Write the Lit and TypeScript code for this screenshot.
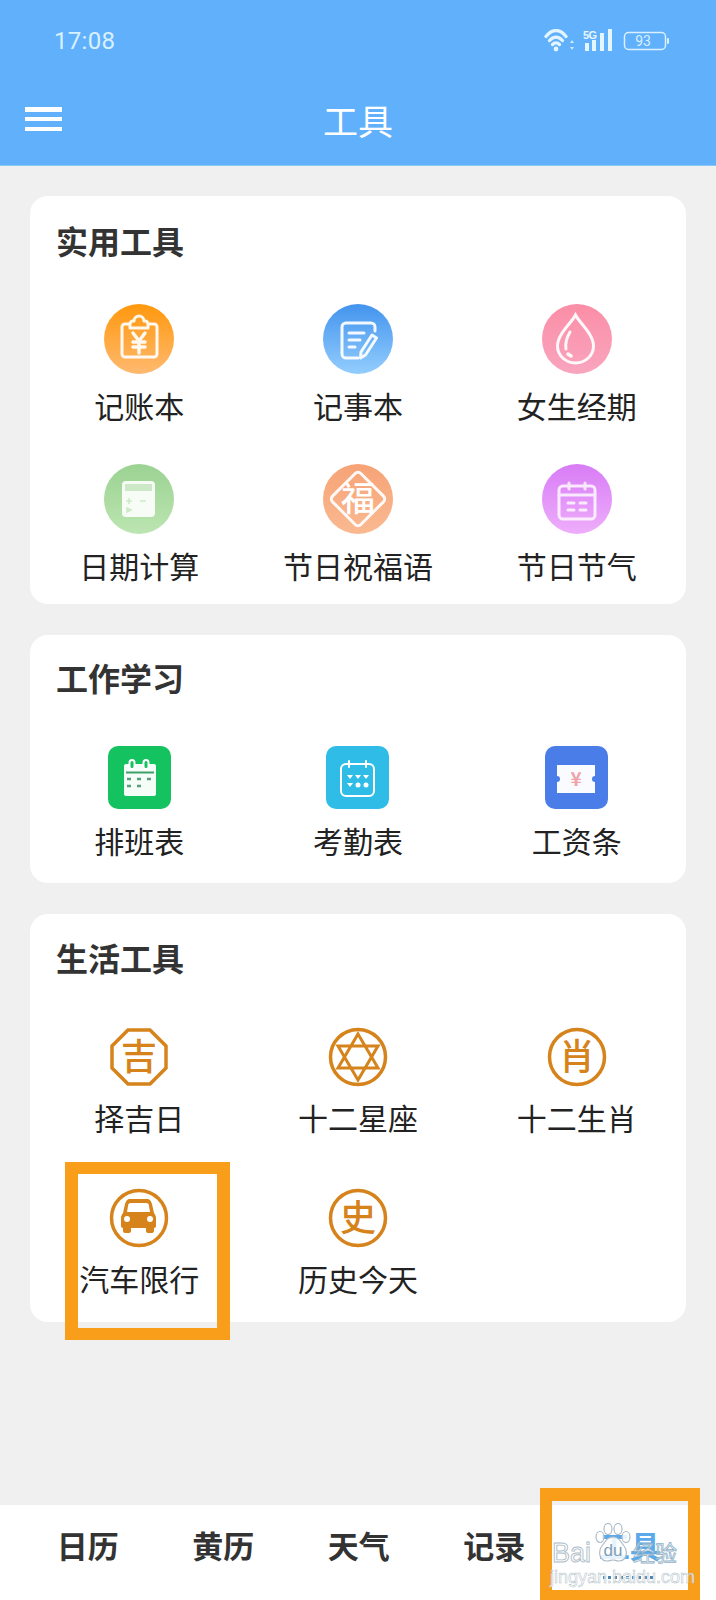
import { LitElement, html, css, svg } from "lit";
import { customElement } from "lit/decorators.js";

const W = "#fff";
const G = "#d5831a";

const icons: Record<string, unknown> = {
  clip: svg`<g fill="none" stroke="${W}" stroke-width="3" stroke-linejoin="round" opacity=".92"><path d="M27 20h-6a3 3 0 0 0-3 3v27a3 3 0 0 0 3 3h29a3 3 0 0 0 3-3V23a3 3 0 0 0-3-3h-6"/><path d="M26 24v-4a3 3 0 0 1 3-3h1a5 5 0 0 1 10 0h1a3 3 0 0 1 3 3v4z"/><path d="M29 29l6 8 6-8M35 37v12M29 38h12M29 43h12" stroke-linecap="round" stroke-width="3.500"/></g>`,
  note: svg`<g fill="none" stroke="${W}" stroke-width="3" stroke-linecap="round" stroke-linejoin="round" opacity=".92"><path d="M52 27v-4a4 4 0 0 0-4-4H23a4 4 0 0 0-4 4v27a4 4 0 0 0 4 4h12"/><path d="M26 29h15M26 36h11M26 43h6"/><path d="M49 31l4.500 3-11 17-5 3 .5-6z"/></g>`,
  drop: svg`<g fill="none" stroke="${W}" stroke-linecap="round" opacity=".92"><path stroke-width="3" d="M33.500 11c-4 8-18 19-18 31a18 17 0 0 0 36 0c0-12-14-23-18-31z"/><path stroke-width="3" d="M28 28c-3 5-5 11-4 17"/><path stroke-width="3.500" d="M26 50l3 2"/></g>`,
  calc: svg`<rect x="18" y="17" width="33" height="36" rx="4" fill="${W}" opacity=".9"/><rect x="21" y="20" width="27" height="7" fill="#a9d9a0" opacity=".55"/><path d="M22 37h6M25 34v6M36 37h6M23 44l4 2-4 2z" stroke="#cdeac7" stroke-width="1.500" fill="#cdeac7"/>`,
  fu: svg`<rect x="15" y="15" width="40" height="40" rx="4" transform="rotate(45 35 35)" fill="none" stroke="${W}" stroke-width="3" opacity=".92"/><text x="35" y="47" class="glyph white">福</text>`,
  cal: svg`<g fill="none" stroke="${W}" stroke-width="3" stroke-linecap="round" stroke-linejoin="round" opacity=".8"><rect x="17" y="22" width="36" height="33" rx="4"/><path d="M17 31h36M27 19v6M43 19v6"/><path d="M26 39h6M38 39h6M26 46h6M38 46h6"/></g>`,
  shift: svg`<rect x="16" y="18" width="32" height="32" rx="2" fill="${W}" opacity=".96"/><g fill="#14c25f" stroke="${W}" stroke-width="2"><rect x="21.500" y="14" width="5" height="9" rx="2.500"/><rect x="35.500" y="14" width="5" height="9" rx="2.500"/></g><path d="M18 26.500h28" stroke="#3f9f6a" stroke-width="2"/><path d="M19 33h4M29 33h4M39 33h4M19 40h4M29 40h4" stroke="#5a9f7c" stroke-width="2.500"/>`,
  attend: svg`<g fill="none" stroke="${W}" stroke-width="2" stroke-linecap="round"><rect x="15" y="18" width="33" height="32" rx="5"/><path d="M23 15v6M40 15v6"/></g><g fill="${W}"><path d="M21 29h6l-3 4zM29 29h6l-3 4zM37 29h6l-3 4zM21 37h6l-3 4z"/><circle cx="32" cy="39" r="2.500"/><circle cx="40" cy="39" r="2.500"/></g>`,
  ticket: svg`<path d="M12 19h38v11a3 3 0 0 0 0 6v11H12V36a3 3 0 0 0 0-6z" fill="${W}" opacity=".97"/><text x="31" y="40" class="yen">¥</text>`,
  ji: svg`<path d="M19 3h22l16 16v22L41 57H19L3 41V19z" fill="none" stroke="${G}" stroke-width="3.500"/><text x="30" y="43" class="glyph gold">吉</text>`,
  star: svg`<circle cx="30" cy="30" r="27.500" fill="none" stroke="${G}" stroke-width="3.500"/><path d="M30 7l20 34H10zM30 53L10 19h40z" fill="none" stroke="${G}" stroke-width="3"/>`,
  xiao: svg`<circle cx="30" cy="30" r="27.500" fill="none" stroke="${G}" stroke-width="3.500"/><text x="30" y="43" class="glyph gold">肖</text>`,
  car: svg`<circle cx="30" cy="30" r="27.500" fill="none" stroke="${G}" stroke-width="3.500"/><path fill="${G}" d="M21 11h17c3 0 4 2 5 5l2 9c1 1 2 3 2 5v8c0 1-1 2-2 2v3c0 1-1 2-2 2h-4c-1 0-2-1-2-2v-3H22v3c0 1-1 2-2 2h-4c-1 0-2-1-2-2v-3c-1 0-2-1-2-2v-8c0-2 1-4 2-5l2-9c1-3 2-5 5-5z"/><path fill="${W}" d="M22 15h15c2 0 3 1 3 3l1 6H18l1-6c0-2 1-3 3-3z"/><circle cx="18" cy="31" r="3" fill="${W}"/><circle cx="41" cy="31" r="3" fill="${W}"/>`,
  shi: svg`<circle cx="30" cy="30" r="27.500" fill="none" stroke="${G}" stroke-width="3.500"/><text x="30" y="43" class="glyph gold">史</text>`,
};

const card1 = [
  ["记账本", "clip", "g1"], ["记事本", "note", "g2"], ["女生经期", "drop", "g3"],
  ["日期计算", "calc", "g4"], ["节日祝福语", "fu", "g5"], ["节日节气", "cal", "g6"],
];
const card2 = [["排班表", "shift", "s1"], ["考勤表", "attend", "s2"], ["工资条", "ticket", "s3"]];
const card3 = [
  ["择吉日", "ji"], ["十二星座", "star"], ["十二生肖", "xiao"], ["汽车限行", "car"], ["历史今天", "shi"],
];
const tabs = ["日历", "黄历", "天气", "记录"];

@customElement("app-root")
export class AppRoot extends LitElement {
  static styles = css`
    :host {
      display: flex; flex-direction: column; position: relative; width: 716px; height: 1600px;
      overflow: hidden; background: #f0f0f0;
      font-family: "Noto Sans CJK SC", "Liberation Sans", sans-serif; color: #222;
    }
    .head { height: 166px; flex: none; background: #61b0fb; box-shadow: inset 0 -1px 0 #8cc8f5; }
    .status { height: 82px; display: flex; align-items: center; justify-content: space-between; padding: 0 46px 0 54px; box-sizing: border-box; color: #d9f0ff; }
    .time { font: 400 24px/1 Roboto, sans-serif; letter-spacing: .3px; }
    .nav { height: 78px; padding-bottom: 4px; box-sizing: border-box; display: flex; align-items: center; justify-content: center; position: relative; color: #fff; font-size: 35px; line-height: 1; font-weight: 400; }
    .burger { position: absolute; left: 25px; top: 25px; width: 37px; height: 24px; display: flex; flex-direction: column; justify-content: space-between; }
    .burger i { display: block; height: 4.500px; background: #fff; }
    .stat-icons { display: block; }
    .battnum { font: 400 14px "Roboto", sans-serif; fill: #d9f0ff; text-anchor: middle; }
    .fiveg { font: 700 11px "Liberation Sans", sans-serif; fill: #e6f6ff; letter-spacing: -.5px; }

    main { flex: 1; display: flex; flex-direction: column; gap: 31px; padding: 30px 30px 0; }
    .card { background: #fff; border-radius: 18px; }
    .c1 { height: 408px; padding: 24px 0 0; box-sizing: border-box; }
    .c2 { height: 248px; padding: 22px 0 0; box-sizing: border-box; }
    .c3 { height: 408px; padding: 23px 0 0; box-sizing: border-box; }
    h2 { margin: 0 0 0 26px; font-size: 32px; line-height: 40px; font-weight: 700; color: #333; }
    .grid { display: grid; grid-template-columns: repeat(3, 1fr); }
    .c1 .grid { margin-top: 44px; row-gap: 39px; }
    .c2 .grid { margin-top: 49px; }
    .c3 .grid { margin-top: 50px; row-gap: 51px; }
    .item { display: flex; flex-direction: column; align-items: center; }
    .label { font-size: 30px; line-height: 40px; margin-top: 11px; color: #222; white-space: nowrap; }
    .c3 .label { margin-top: 10px; }
    .ic { display: block; }
    .round { width: 70px; height: 70px; border-radius: 50%; }
    .sq { width: 63px; height: 63px; border-radius: 10px; }
    .plain { width: 60px; height: 60px; }
    .g1 { background: linear-gradient(#ff980d, #ffb96f); }
    .g2 { background: linear-gradient(#4394ee, #93cdfd); }
    .g3 { background: linear-gradient(#fb8ea7, #f9a5be); }
    .g4 { background: linear-gradient(#9bd292, #bce5b1); }
    .g5 { background: linear-gradient(#f6a376, #fab991); }
    .g6 { background: linear-gradient(#d87cf6, #eeaefb); }
    .s1 { background: #14c25f; }
    .s2 { background: #2fbde8; }
    .s3 { background: #4a7de8; }
    .glyph { font-family: "Noto Sans CJK SC", sans-serif; text-anchor: middle; font-size: 36px; }
    .glyph.white { fill: #fff; font-size: 34px; font-weight: 500; }
    .glyph.gold { fill: #d5831a; font-weight: 500; }
    .yen { fill: #f0a3a8; font: 700 19px "Noto Sans CJK SC", sans-serif; text-anchor: middle; }

    .tabs { height: 95px; flex: none; background: #fff; display: grid; grid-template-columns: repeat(5, 135.500px); padding: 0 18px 0 20px; box-sizing: border-box; align-items: start; }
    .tab { padding-top: 20px; text-align: center; font-size: 31px; line-height: 40px; font-weight: 700; color: #333; }
    .tab.on { color: #5aa9ea; }

    .mark { position: absolute; box-sizing: border-box; border: solid #f99e1a; pointer-events: none; }
    .m1 { left: 65px; top: 1162px; width: 165px; height: 178px; border-width: 12px 13px; }
    .m2 { left: 540px; top: 1488px; width: 160px; height: 112px; border-width: 13px 12px 10px; }

    .wm { position: absolute; left: 550px; top: 1522px; width: 128px; height: 64px; pointer-events: none; }
    .wm-bai { position: absolute; left: 2px; top: 18px; font: 400 27px/26px "Liberation Sans", sans-serif; color: rgba(255,255,255,.9); -webkit-text-stroke: .9px #aebcc6; }
    .wm-jy { position: absolute; right: 1px; top: 15px; font-size: 22px; line-height: 28px; color: rgba(255,255,255,.5); -webkit-text-stroke: .8px #8fb0c6; }
    .wm-url { position: absolute; left: 0; top: 45px; font: 400 18px/20px "Liberation Sans", sans-serif; color: rgba(255,255,255,.85); -webkit-text-stroke: .5px #aebcc6; white-space: nowrap; }
    .wm-paw { position: absolute; left: 43px; top: 1px; }
    .wm-du { font: 400 17px "Liberation Sans", sans-serif; fill: #7f9db5; text-anchor: middle; }
    .wm-dots { position: absolute; left: 53px; top: 54px; width: 50px; border-top: 3px dotted #4f86ad; }
  `;

  private statusIcons() {
    return html`<svg class="stat-icons" width="126" height="24" viewBox="0 0 126 24">
      <g fill="none" stroke="#e3f5ff" stroke-width="3.300" stroke-linecap="round">
        <path d="M2 7.500C8-.5 16-.5 22 7.500"/>
        <path d="M5.500 11.500c4-4.500 9-4.500 13 0"/>
        <path d="M8.500 15.500c2-2 5-2 7 0"/>
      </g>
      <circle cx="12" cy="20" r="2.400" fill="#e3f5ff"/>
      <path d="M26 14l2-3 2 3zM26 18l2 3 2-3z" fill="#cbeaff"/>
      <text x="39" y="10" class="fiveg">5G</text>
      <g fill="#e3f5ff"><rect x="41" y="14" width="4" height="8"/><rect x="48" y="11" width="4" height="11"/><rect x="56" y="4" width="4" height="18"/><rect x="64" y="0" width="4" height="22"/></g>
      <rect x="80.500" y="3.500" width="41" height="17" rx="4" fill="none" stroke="#d9f0ff" stroke-width="1.500"/>
      <rect x="123" y="9" width="2" height="6" rx="1" fill="#d9f0ff"/>
      <text x="99" y="17" class="battnum">93</text>
    </svg>`;
  }

  private item(label: string, icon: string, cls: string, size: number) {
    return html`<div class="item">
      <svg class="ic ${cls}" viewBox="0 0 ${size} ${size}">${icons[icon]}</svg>
      <div class="label">${label}</div>
    </div>`;
  }

  render() {
    return html`
      <header class="head">
        <div class="status"><span class="time">17:08</span>${this.statusIcons()}</div>
        <div class="nav"><div class="burger"><i></i><i></i><i></i></div>工具</div>
      </header>
      <main>
        <section class="card c1"><h2>实用工具</h2><div class="grid">
          ${card1.map(([l, i, c]) => this.item(l, i, `round ${c}`, 70))}
        </div></section>
        <section class="card c2"><h2>工作学习</h2><div class="grid">
          ${card2.map(([l, i, c]) => this.item(l, i, `sq ${c}`, 63))}
        </div></section>
        <section class="card c3"><h2>生活工具</h2><div class="grid">
          ${card3.map(([l, i]) => this.item(l, i, "plain", 60))}
        </div></section>
      </main>
      <nav class="tabs">
        ${tabs.map((t) => html`<div class="tab">${t}</div>`)}
        <div class="tab on">工具</div>
      </nav>
      <div class="mark m1"></div>
      <div class="mark m2"></div>
      <div class="wm">
        <svg class="wm-paw" width="40" height="40" viewBox="0 0 36 40">
          <g fill="rgba(255,255,255,.85)" stroke="#aebcc6" stroke-width="1.200">
            <ellipse cx="5" cy="14" rx="4" ry="5.500"/><ellipse cx="13" cy="6" rx="4" ry="5.500"/>
            <ellipse cx="23" cy="6" rx="4" ry="5.500"/><ellipse cx="31" cy="14" rx="4" ry="5.500"/>
            <path d="M18 14c-6 0-8 5-11 9-4 5-3 15 5 15 3 0 4-1 6-1s3 1 6 1c8 0 9-10 5-15-3-4-5-9-11-9z"/>
          </g>
          <text x="18" y="33" class="wm-du">du</text>
        </svg>
        <div class="wm-bai">Bai</div>
        <div class="wm-jy">经验</div>
        <div class="wm-dots"></div>
        <div class="wm-url">jingyan.baidu.com</div>
      </div>
    `;
  }
}
